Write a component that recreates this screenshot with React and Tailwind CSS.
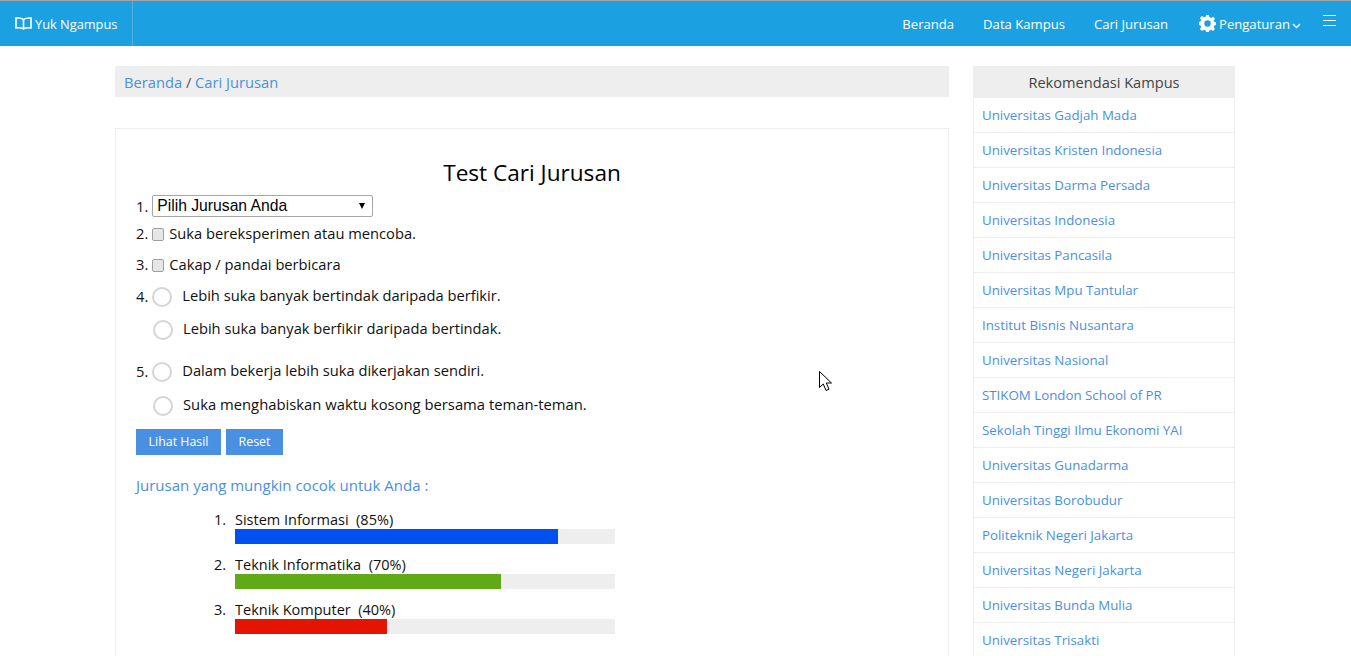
import React from "react";

const kampus = ["Universitas Gadjah Mada","Universitas Kristen Indonesia","Universitas Darma Persada","Universitas Indonesia","Universitas Pancasila","Universitas Mpu Tantular","Institut Bisnis Nusantara","Universitas Nasional","STIKOM London School of PR","Sekolah Tinggi Ilmu Ekonomi YAI","Universitas Gunadarma","Universitas Borobudur","Politeknik Negeri Jakarta","Universitas Negeri Jakarta","Universitas Bunda Mulia","Universitas Trisakti"];

const hasil = [
  { n: "1.", t: "Sistem Informasi", p: "(85%)", w: 85, c: "bg-[#0050ef]" },
  { n: "2.", t: "Teknik Informatika", p: "(70%)", w: 70, c: "bg-[#60a917]" },
  { n: "3.", t: "Teknik Komputer", p: "(40%)", w: 40, c: "bg-[#e51400]" },
];

const Radio = () => <span className="block w-5 h-5 rounded-full border-2 border-[#d4d4d4] bg-white shrink-0" />;

const Check = () => <span className="block w-[12px] h-[13px] mt-[2px] rounded-[2px] border border-[#a0a0a0] bg-[#e6e6e6] shrink-0" />;

function Book() {
  return (
    <svg width="17" height="13" viewBox="0 0 17 13" fill="none" stroke="white" strokeWidth="1.6" className="shrink-0">
      <path d="M8.500 2.500C7 1.200 4 .9 1 1.100V10.900C4 10.700 7 10.800 8.500 11.900C10 10.800 13 10.700 16 10.900V1.100C13 .9 10 1.200 8.500 2.500Z" />
      <path d="M8.500 2.500V11.900" />
    </svg>
  );
}

function Gear() {
  return (
    <svg width="17" height="17" viewBox="0 0 24 24" fill="white" className="shrink-0">
      <path fillRule="evenodd" d="M10 0h4l.7 3.300c.8.2 1.600.6 2.300 1l2.900-1.800 2.800 2.800L20.700 8c.4.7.7 1.500 1 2.300L24 10v4l-2.300.7c-.3.8-.6 1.600-1 2.300l1.800 2.900-2.800 2.800L17 20.900c-.7.4-1.500.7-2.300.9L14 24h-4l-.7-2.200c-.8-.2-1.600-.5-2.300-.9l-2.900 1.800-2.800-2.800L3.100 17c-.4-.7-.7-1.500-.9-2.300L0 14v-4l2.200-.7c.2-.8.5-1.600.9-2.300L1.300 4.300l2.800-2.800L7 3.300c.7-.4 1.500-.7 2.300-.9L10 0Zm2 7.500a4.500 4.500 0 1 0 0 9 4.500 4.500 0 0 0 0-9Z" />
    </svg>
  );
}

export default function App() {
  return (
    <div className="h-[656px] overflow-hidden bg-white text-[14.700px] text-[#111] font-['Open_Sans','Noto_Sans',sans-serif]">
      <header className="h-[46px] bg-[#1ba1e2] border-t border-[#a3a3a3] flex items-stretch text-white text-[13.100px]">
        <div className="w-[133px] border-r border-[#57b0dc] flex items-center gap-[3px] pl-[15px] pt-[2px] text-[12.800px]">
          <span className="-mt-[3px]"><Book /></span>
          <span>Yuk Ngampus</span>
        </div>
        <nav className="ml-auto flex items-center pt-[2px]">
          <span>Beranda</span>
          <span className="ml-[29px]">Data Kampus</span>
          <span className="ml-[29px]">Cari Jurusan</span>
          <span className="ml-[31px] flex items-center gap-[3px]"><span className="-mt-[2px]"><Gear /></span>Pengaturan
            <svg width="9" height="6" viewBox="0 0 9 6" fill="none" stroke="white" strokeWidth="1.4" className="-ml-[1px] mt-[3px]"><path d="M1 1l3.500 3.500L8 1" /></svg>
          </span>
          <span className="ml-[22px] mr-[15px] -mt-[8px] flex flex-col gap-[4px] w-[13px]">
            <i className="block h-px bg-white" /><i className="block h-px bg-white" /><i className="block h-px bg-white" />
          </span>
        </nav>
      </header>

      <div className="flex items-start gap-[24px] pl-[115px] pt-[20px]">
        <main className="w-[834px]">
          <div className="h-[31px] bg-[#eeeeee] flex items-center pl-[9px] pt-[2px] text-[14.700px] text-[#555]">
            <span className="text-[#4a90e2]">Beranda</span>&nbsp;/&nbsp;<span className="text-[#4a90e2]">Cari Jurusan</span>
          </div>
          <section className="mt-[31px] border border-[#eeeeee] pl-[20px] pt-[28px] h-[600px]">
            <h1 className="text-center text-[22.600px] leading-[32px] text-black mr-[20px]">Test Cari Jurusan</h1>
            <div className="flex items-center gap-[4px] mt-[6px] h-[22px]">
              <span>1.</span>
              <div className="w-[221px] h-[22px] border border-[#a6a6a6] rounded-[2px] flex items-center justify-between pl-[4px] pr-[7px] text-[15.700px] text-black font-['Liberation_Sans',sans-serif]">
                <span>Pilih Jurusan Anda</span>
                <span className="w-0 h-0 border-x-[3.500px] border-x-transparent border-t-[6px] border-t-black" />
              </div>
            </div>
            <div className="flex items-center gap-[4px] mt-[4px] h-[25px]"><span>2.</span><Check /><span className="ml-[1px]">Suka bereksperimen atau mencoba.</span></div>
            <div className="flex items-center gap-[4px] mt-[6px] h-[25px]"><span>3.</span><Check /><span className="ml-[1px]">Cakap / pandai berbicara</span></div>
            <div className="flex items-center gap-[4px] mt-[7px] h-[25px]"><span>4.</span><Radio /><span className="ml-[6px] -mt-[2px]">Lebih suka banyak bertindak daripada berfikir.</span></div>
            <div className="flex items-center mt-[8px] h-[25px] pl-[17px]"><Radio /><span className="ml-[10px] -mt-[2px]">Lebih suka banyak berfikir daripada bertindak.</span></div>
            <div className="flex items-center gap-[4px] mt-[17px] h-[25px]"><span>5.</span><Radio /><span className="ml-[6px] -mt-[2px]">Dalam bekerja lebih suka dikerjakan sendiri.</span></div>
            <div className="flex items-center mt-[9px] h-[25px] pl-[17px]"><Radio /><span className="ml-[10px] -mt-[2px] text-[14.800px]">Suka menghabiskan waktu kosong bersama teman-teman.</span></div>
            <div className="flex gap-[5px] mt-[11px] text-[12.400px] text-white">
              <span className="w-[85px] h-[26px] bg-[#4a90e2] flex items-center justify-center">Lihat Hasil</span>
              <span className="w-[57px] h-[26px] bg-[#4a90e2] flex items-center justify-center">Reset</span>
            </div>
            <p className="mt-[20px] text-[#4a90e2] text-[15px] leading-[21px]">Jurusan yang mungkin cocok untuk Anda :</p>
            <ol className="mt-[13px] text-[14.500px]">
              {hasil.map((h) => (
                <li key={h.n} className="flex h-[45px] pl-[78px]">
                  <span className="w-[21px] h-[20px] leading-[22px]">{h.n}</span>
                  <div className="w-[380px]">
                    <div className="h-[20px] leading-[22px] whitespace-pre">{h.t}  {h.p}</div>
                    <div className="h-[15px] bg-[#eeeeee]"><div className={`h-full ${h.c}`} style={{ width: `${h.w}%` }} /></div>
                  </div>
                </li>
              ))}
            </ol>
          </section>
        </main>
        <aside className="w-[262px]">
          <div className="h-[32px] bg-[#eeeeee] flex items-center justify-center pt-[2px] text-[14.600px] text-[#444]">Rekomendasi Kampus</div>
          <ul className="border-x border-[#eeeeee]">
            {kampus.map((k) => (
              <li key={k} className="h-[35px] border-b border-[#eeeeee] flex items-center pl-[8px] pt-[2px] text-[13.300px] text-[#4a90e2]">{k}</li>
            ))}
          </ul>
        </aside>
      </div>

      <svg width="14" height="22" viewBox="0 0 14 22" className="absolute left-[819px] top-[371px]">
        <path d="M.5.5V16.500L4.300 13l2.700 6.500 3-1.300L7.300 12H12.500Z" fill="white" stroke="black" strokeWidth="1" />
      </svg>
    </div>
  );
}
